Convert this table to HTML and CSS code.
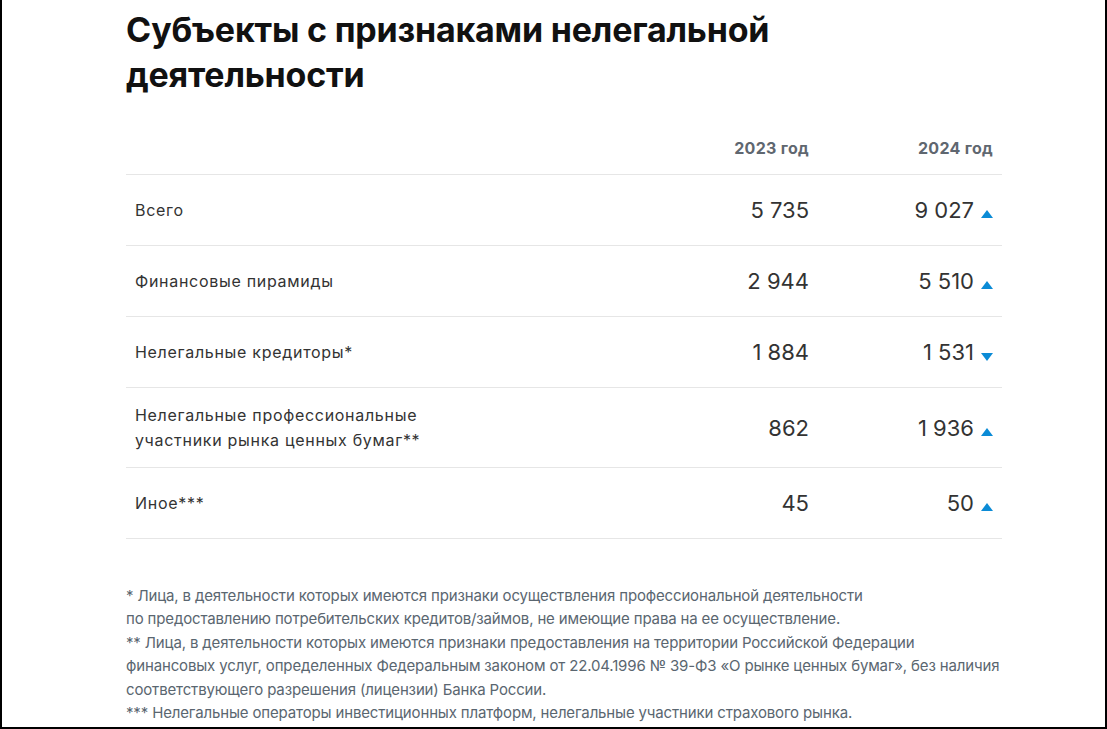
FILE: index.html
```html
<!DOCTYPE html>
<html lang="ru">
<head>
<meta charset="utf-8">
<title>Субъекты с признаками нелегальной деятельности</title>
<link rel="stylesheet" href="styles.css">
</head>
<body>
<div class="frame">
  <main class="content">
    <h1 class="title">Субъекты с признаками нелегальной деятельности</h1>
    <table class="data">
      <thead>
        <tr>
          <th class="label-col"></th>
          <th class="num-col">2023 год</th>
          <th class="num-col last">2024 год</th>
        </tr>
      </thead>
      <tbody>
        <tr>
          <td class="label">Всего</td>
          <td class="num">5 735</td>
          <td class="num last">9 027<span class="arrow up"></span></td>
        </tr>
        <tr>
          <td class="label">Финансовые пирамиды</td>
          <td class="num">2 944</td>
          <td class="num last">5 510<span class="arrow up"></span></td>
        </tr>
        <tr>
          <td class="label">Нелегальные кредиторы*</td>
          <td class="num">1 884</td>
          <td class="num last">1 531<span class="arrow down"></span></td>
        </tr>
        <tr>
          <td class="label">Нелегальные профессиональные<br>участники рынка ценных бумаг**</td>
          <td class="num">862</td>
          <td class="num last">1 936<span class="arrow up"></span></td>
        </tr>
        <tr>
          <td class="label">Иное***</td>
          <td class="num">45</td>
          <td class="num last">50<span class="arrow up"></span></td>
        </tr>
      </tbody>
    </table>
    <div class="notes">
      <p>* Лица, в деятельности которых имеются признаки осуществления профессиональной деятельности<br>по предоставлению потребительских кредитов/займов, не имеющие права на ее осуществление.</p>
      <p>** Лица, в деятельности которых имеются признаки предоставления на территории Российской Федерации<br>финансовых услуг, определенных Федеральным законом от 22.04.1996 № 39-ФЗ «О рынке ценных бумаг», без наличия<br>соответствующего разрешения (лицензии) Банка России.</p>
      <p>*** Нелегальные операторы инвестиционных платформ, нелегальные участники страхового рынка.</p>
    </div>
  </main>
</div>
</body>
</html>
```

FILE: styles.css
```css
* { box-sizing: border-box; }
html, body { margin: 0; padding: 0; background: #fff; }
body { font-family: Inter, "Noto Sans", sans-serif; color: #333; }

.frame {
  width: 1107px;
  height: 729px;
  border-left: 2px solid #000;
  border-right: 2px solid #000;
  border-bottom: 2px solid #000;
  overflow: hidden;
}

.content {
  width: 876px;
  margin-left: 124px;
  padding-top: 7px;
}

.title {
  margin: 0;
  font-family: Inter, "Liberation Sans", sans-serif;
  font-weight: 700;
  font-size: 34px;
  line-height: 45px;
  color: #111;
  letter-spacing: -0.2px;
  width: 700px;
}

.data {
  width: 876px;
  border-collapse: collapse;
  margin-top: 25px;
}

.data th {
  font-size: 16px;
  font-weight: 700;
  color: #5f6770;
  text-align: right;
  letter-spacing: 0.3px;
  padding: 0 9px 16px;
  height: 52px;
  vertical-align: bottom;
  border-bottom: 1px solid #e6e6e6;
}
.data th.num-col { width: 184px; }
.data th.last { padding-right: 9px; }

.data td {
  border-bottom: 1px solid #e6e6e6;
  height: 71px;
  padding: 15px 9px 14px;
  vertical-align: middle;
}

.label {
  font-size: 16px;
  line-height: 25px;
  letter-spacing: 0.7px;
  color: #333;
}

.num {
  text-align: right;
  font-size: 22px;
  font-weight: 400;
  color: #333;
  white-space: nowrap;
}

.num:not(.last) { padding-right: 9px; }

.arrow {
  display: inline-block;
  width: 0;
  height: 0;
  margin-left: 7px;
  border-left: 6px solid transparent;
  border-right: 6px solid transparent;
  vertical-align: 0px;
}
.arrow.up { border-bottom: 8px solid #0b8bd6; }
.arrow.down { border-top: 8px solid #0b8bd6; vertical-align: -1px; }

.notes {
  margin-top: 45px;
  width: 900px;
  font-size: 15px;
  line-height: 23.5px;
  letter-spacing: -0.15px;
  color: #5a6670;
  white-space: nowrap;
}
.notes p { margin: 0; }
```
